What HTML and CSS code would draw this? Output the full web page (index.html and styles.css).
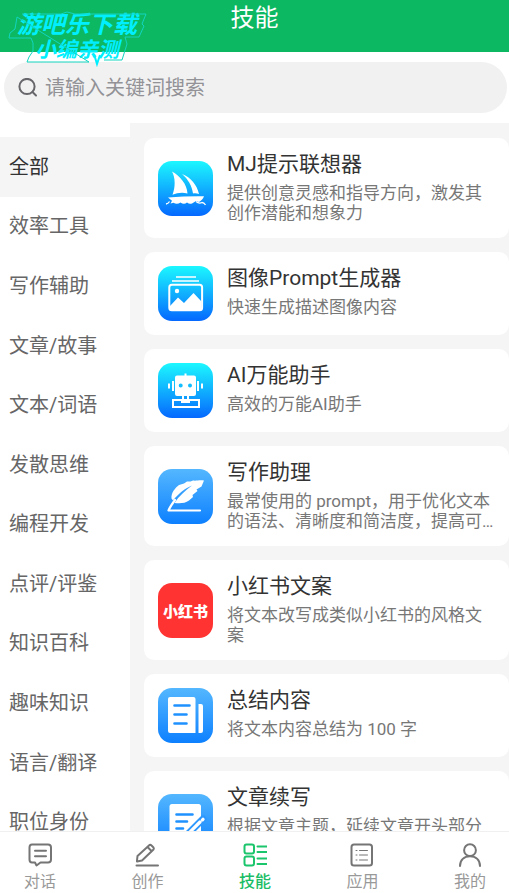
FILE: index.html
```html
<!DOCTYPE html>
<html lang="zh-CN">
<head>
<meta charset="utf-8">
<meta name="viewport" content="width=device-width, initial-scale=1">
<title>技能</title>
<link rel="stylesheet" href="styles.css">
</head>
<body>
<svg class="defs" aria-hidden="true">
  <defs>
    <linearGradient id="cyan" x1="0" y1="0" x2="0" y2="1"><stop offset="0" stop-color="#1cf8ff"/><stop offset="1" stop-color="#0568ff"/></linearGradient>
    <linearGradient id="blue" x1="0" y1="0" x2="0" y2="1"><stop offset="0" stop-color="#54b7ff"/><stop offset="1" stop-color="#0d80ff"/></linearGradient>
  </defs>
</svg>
<div class="app">
  <header class="header">
    <h1 class="header-title">技能</h1>
    <div class="stamp">
      <svg class="stamp-frame" viewBox="0 0 140 56" aria-hidden="true"><path d="M15 3H54L60 1L68 3H139L135 13L137 15L132 26H118L120 33L115 49H97M82 51H20L22 46L26 40V32L24 27H2L3 22L8 18L10 6Z"/><path class="stamp-tail" d="M87 43L90 53L93 44"/></svg>
      <span class="stamp-top">游吧乐下载</span>
      <span class="stamp-bottom">小编亲测</span>
    </div>
  </header>

  <form class="search" role="search">
    <label class="search-box">
      <svg class="search-icon" viewBox="0 0 20 20" aria-hidden="true"><circle cx="9" cy="8.500" r="7.600"/><path d="M14.500 14L18 17.500"/></svg>
      <input class="search-input" type="search" placeholder="请输入关键词搜索" aria-label="请输入关键词搜索">
    </label>
  </form>

  <main class="content">
    <nav class="categories" aria-label="分类">
      <button class="category active" type="button">全部</button>
      <button class="category" type="button">效率工具</button>
      <button class="category" type="button">写作辅助</button>
      <button class="category" type="button">文章/故事</button>
      <button class="category" type="button">文本/词语</button>
      <button class="category" type="button">发散思维</button>
      <button class="category" type="button">编程开发</button>
      <button class="category" type="button">点评/评鉴</button>
      <button class="category" type="button">知识百科</button>
      <button class="category" type="button">趣味知识</button>
      <button class="category" type="button">语言/翻译</button>
      <button class="category" type="button">职位身份</button>
    </nav>

    <div class="skills">
      <a class="card" href="#">
        <svg class="card-icon" viewBox="0 0 55 55" aria-hidden="true"><rect width="55" height="55" rx="14" fill="url(#cyan)"/>
          <path fill="#fff" d="M14 10.500C22 15 29 23 29.500 32.500C24 31 19 32 14.500 33.800C17.500 26 17.500 17 14 10.500ZM24 13C33 16.500 39 24 41 33C39 32.300 37 32.200 35 32.500C34 25 30 18 24 13ZM10 36.500C22 35.500 34 35 46 35.200C45 38 43 40 41 41L38 40L34 42.500Q31.500 43.500 29 41.500Q26 44 22.500 41.500Q19 44 15.500 41.800L12.500 42.500L14 39.800Z"/>
          <path fill="none" stroke="#fff" stroke-width="1.300" d="M8 43Q10.500 42.500 11.500 40.500M38 40.500Q41 43 44 41.500Q46 41.500 47.500 44"/></svg>
        <div class="card-text"><h2 class="card-title">MJ提示联想器</h2><p class="card-desc">提供创意灵感和指导方向，激发其创作潜能和想象力</p></div>
      </a>
      <a class="card" href="#">
        <svg class="card-icon" viewBox="0 0 55 55" aria-hidden="true"><rect width="55" height="55" rx="14" fill="url(#cyan)"/>
          <path fill="none" stroke="#fff" stroke-width="1.600" d="M18 11H38M14 15H41"/>
          <rect x="11.300" y="18.800" width="32.800" height="25.400" rx="2.500" fill="none" stroke="#fff" stroke-width="2"/>
          <circle cx="19" cy="25" r="2.200" fill="#fff"/><path fill="#fff" d="M12 40L20 31.500L26 37L35.500 27L43.500 35.500V44H12Z"/></svg>
        <div class="card-text"><h2 class="card-title">图像Prompt生成器</h2><p class="card-desc">快速生成描述图像内容</p></div>
      </a>
      <a class="card" href="#">
        <svg class="card-icon" viewBox="0 0 55 55" aria-hidden="true"><rect width="55" height="55" rx="14" fill="url(#cyan)"/>
          <path fill="#fff" fill-rule="evenodd" d="M26.500 10.500h2v2H36q2 0 2 2V31q0 2-2 2H31v3.500h-2V33h-3v3.500h-2V33H19q-2 0-2-2V14.500q0-2 2-2h7.500ZM22.700 20.500a2 2 0 1 0 0 4a2 2 0 1 0 0-4ZM32 20.500a2 2 0 1 0 0 4a2 2 0 1 0 0-4Z"/>
          <path fill="none" stroke="#fff" stroke-width="2" d="M15 18V28M40 18V28M11 20.500V25.500M44 20.500V25.500M15 37H41V44H15ZM24 36V39H31V36"/></svg>
        <div class="card-text"><h2 class="card-title">AI万能助手</h2><p class="card-desc">高效的万能AI助手</p></div>
      </a>
      <a class="card" href="#">
        <svg class="card-icon" viewBox="0 0 55 55" aria-hidden="true"><rect width="55" height="55" rx="14" fill="url(#blue)"/>
          <path fill="#fff" d="M46 11.500C41 11 38 12 35 11.500L32.500 12.500L29 12.500L26 14.500L21 16C17 19 13 24 13.500 29.500L15 31.500C21 24 27 19.500 34 16.500C27 22 21 27 16.500 34C22 34.500 27 34.500 31 31.500L35 28L34.500 26L39.500 22L38.500 20.500L43.500 17.500Z"/>
          <path fill="none" stroke="#fff" stroke-width="2.200" stroke-linecap="round" stroke-linejoin="round" d="M17 31C14 35 12 38 10.500 41.500H42"/></svg>
        <div class="card-text"><h2 class="card-title">写作助理</h2><p class="card-desc">最常使用的 prompt，用于优化文本的语法、清晰度和简洁度，提高可读性和流畅度</p></div>
      </a>
      <a class="card" href="#">
        <span class="card-icon red-logo">小红书</span>
        <div class="card-text"><h2 class="card-title">小红书文案</h2><p class="card-desc">将文本改写成类似小红书的风格文案</p></div>
      </a>
      <a class="card" href="#">
        <svg class="card-icon" viewBox="0 0 55 55" aria-hidden="true"><rect width="55" height="55" rx="14" fill="url(#blue)"/>
          <path fill="#fff" d="M12 9H35.500Q37.500 9 37.500 11V45H12Q10 45 10 43V11Q10 9 12 9ZM40.500 16H43Q45 16 45 18V43Q45 45 43 45H40.500Z"/>
          <path stroke="#1f91ff" stroke-width="2.600" stroke-linecap="round" d="M16.500 17.500H31.500M16.500 26.500H28.500M16.500 35.500H28.500"/></svg>
        <div class="card-text"><h2 class="card-title">总结内容</h2><p class="card-desc">将文本内容总结为 100 字</p></div>
      </a>
      <a class="card" href="#">
        <svg class="card-icon" viewBox="0 0 55 55" aria-hidden="true"><rect width="55" height="55" rx="14" fill="url(#blue)"/>
          <path fill="#fff" d="M14 10H40.500Q43 10 43 12.500V43Q43 45 40.500 45H14Q11.500 45 11.500 42.500V12.500Q11.500 10 14 10Z"/>
          <path stroke="#1f91ff" stroke-width="2.600" stroke-linecap="round" d="M18.500 20.500H34.500M18.500 27.500H29M18.500 34.500H25"/>
          <path stroke="#2c98ff" stroke-width="7" stroke-linecap="round" d="M31 39L45 25"/>
          <path stroke="#fff" stroke-width="3.200" stroke-linecap="round" d="M31 39L42 28M44.500 25.800L45 25.300"/></svg>
        <div class="card-text"><h2 class="card-title">文章续写</h2><p class="card-desc">根据文章主题，延续文章开头部分的内容</p></div>
      </a>
    </div>
  </main>

  <nav class="tabbar" aria-label="主导航">
    <a class="tab" href="#"><svg class="tab-icon" viewBox="0 0 24 24" aria-hidden="true"><path d="M4 1.500H20Q23 1.500 23 4.500V16.500Q23 19.500 20 19.500H12.500L8.500 22.500L7 19.500H4Q1.500 19.500 1.500 16.500V4.500Q1.500 1.500 4 1.500ZM7 7.700H18M7 13.200H18"/></svg>对话</a>
    <a class="tab" href="#"><svg class="tab-icon" viewBox="0 0 24 24" aria-hidden="true"><path d="M1.500 22.500H23M2 17.500L2.500 13L14.500 2Q15.500 1.500 16.500 2.500L18.500 4.500Q19.200 5.500 18.500 6.500L7 17.500L2 18.500ZM12.500 4L16.500 8"/></svg>创作</a>
    <a class="tab current" href="#" aria-current="page"><svg class="tab-icon" viewBox="0 0 24 24" aria-hidden="true"><rect x="1.500" y="1.500" width="9.500" height="9" rx="2"/><rect x="1.500" y="13.500" width="9.500" height="9" rx="2"/><path d="M14.500 3.500H23.500M14.500 9H23.500M14.500 15.500H23.500M14.500 21H23.500"/></svg>技能</a>
    <a class="tab" href="#"><svg class="tab-icon" viewBox="0 0 24 24" aria-hidden="true"><rect x="1.500" y="1.500" width="20.500" height="21" rx="2.500"/><path class="thin" d="M6 7.500H7M9.500 7.500H17.500M6 12H7M9.500 12H17.500M6 17H7M9.500 17H17.500"/></svg>应用</a>
    <a class="tab" href="#"><svg class="tab-icon" viewBox="0 0 24 24" aria-hidden="true"><circle cx="12" cy="7.200" r="5.900"/><path d="M2 23C2 17 6 13.200 12 13.200S22 17 22 23"/></svg>我的</a>
  </nav>
</div>
</body>
</html>
```

FILE: styles.css
```css
* {
  box-sizing: border-box;
}

body {
  margin: 0;
  background: #fff;
  color: #333;
  font-family: Roboto, "Noto Sans CJK SC", sans-serif;
}

h1,
h2,
p {
  margin: 0;
  font-weight: 400;
}

a {
  color: inherit;
  text-decoration: none;
}

.defs {
  position: absolute;
  width: 0;
  height: 0;
}

.app {
  display: flex;
  flex-direction: column;
  height: 100vh;
  overflow: hidden;
}

.header {
  position: relative;
  flex: none;
  height: 52px;
  background: #0db863;
  color: #fff;
  text-align: center;
}

.header-title {
  font-size: 24px;
  line-height: 36px;
}

/* Slanted stamp that hangs over the header's lower edge */
.stamp {
  position: absolute;
  top: 11px;
  left: 7px;
  display: flex;
  flex-direction: column;
  align-items: center;
  width: 140px;
  color: #00efff;
  font-style: italic;
  font-weight: 700;
}

.stamp-frame {
  position: absolute;
  inset: 0;
  width: 140px;
  height: 56px;
  fill: none;
  stroke: #12d5c0;
  stroke-width: 1;
}

.stamp-tail {
  stroke: #00efff;
  stroke-width: 2;
}

.stamp-top {
  font-size: 24px;
  line-height: 29px;
}

.stamp-bottom {
  font-size: 21px;
  line-height: 20px;
}

.search {
  flex: none;
  padding: 10px 2px 10px 4px;
}

.search-box {
  display: flex;
  align-items: center;
  gap: 7px;
  height: 51px;
  padding: 0 18px 0 14px;
  border-radius: 26px;
  background: #f1f1f1;
}

.search-icon {
  flex: none;
  width: 20px;
  height: 20px;
  fill: none;
  stroke: #66666b;
  stroke-width: 2;
  stroke-linecap: round;
}

.search-input {
  flex: 1;
  min-width: 0;
  padding: 0;
  border: 0;
  outline: 0;
  background: none;
  color: #333;
  font: inherit;
  font-size: 20px;
  line-height: 30px;
  appearance: none;
}

.search-input::placeholder {
  color: #929297;
}

.content {
  display: flex;
  flex: 1;
  min-height: 0;
  background: #f5f5f5;
}

.categories {
  display: grid;
  grid-auto-rows: 1fr;
  flex: none;
  width: 130px;
  height: calc(100vh - 164px);
  padding-top: 14px;
  background: #fff;
}

.category {
  padding: 0 9px;
  border: 0;
  background: none;
  color: #666;
  font: inherit;
  font-size: 20px;
  line-height: 30px;
  text-align: left;
}

.category.active {
  background: #f5f5f5;
  color: #333;
}

.skills {
  display: flex;
  flex: 1;
  flex-direction: column;
  gap: 14px;
  min-width: 0;
  padding: 15px 0 14px 14px;
  overflow-y: auto;
  scrollbar-width: none;
}

.card {
  display: flex;
  flex: none;
  align-items: center;
  gap: 14px;
  padding: 14px;
  border-radius: 10px;
  background: #fff;
}

.card-icon {
  flex: none;
  width: 55px;
  height: 55px;
}

.red-logo {
  display: flex;
  align-items: center;
  justify-content: center;
  border-radius: 14px;
  background: #ff3432;
  color: #fff;
  font-size: 15px;
  font-weight: 900;
}

.card-text {
  flex: 1;
  align-self: flex-start;
  min-width: 0;
}

.card-title {
  margin-bottom: 7px;
  font-size: 21px;
  line-height: 24px;
}

.card-desc {
  display: -webkit-box;
  overflow: hidden;
  padding-bottom: 1px;
  color: #777;
  font-size: 17px;
  line-height: 20px;
  -webkit-box-orient: vertical;
  -webkit-line-clamp: 2;
}

.tabbar {
  position: relative;
  display: flex;
  flex: none;
  justify-content: space-between;
  height: 62px;
  padding: 11px 23px 0 24px;
  border-top: 1px solid #f0f0f0;
  background: #fff;
}

.tab {
  display: flex;
  flex-direction: column;
  align-items: center;
  gap: 5px;
  color: #999;
  font-size: 16px;
  line-height: 20px;
}

.tab-icon {
  width: 24px;
  height: 24px;
  fill: none;
  stroke: #757575;
  stroke-width: 2;
  stroke-linecap: round;
  stroke-linejoin: round;
}

.tab-icon .thin {
  stroke-width: 1;
}

.tab.current {
  color: #1bbd66;
  font-weight: 500;
}

.tab.current .tab-icon {
  stroke: #1bc56b;
}
```
